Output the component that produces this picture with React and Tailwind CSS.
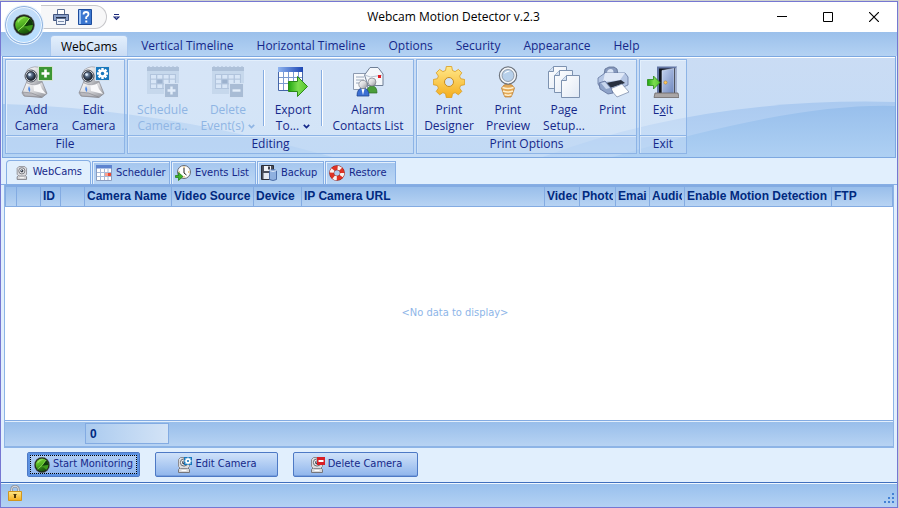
import React, { useState } from "react";

const MENU_TABS = [
  "WebCams",
  "Vertical Timeline",
  "Horizontal Timeline",
  "Options",
  "Security",
  "Appearance",
  "Help",
];

const COLUMNS = [
  { label: "", width: 11 },
  { label: "", width: 24 },
  { label: "ID", width: 20 },
  { label: "", width: 24 },
  { label: "Camera Name", width: 87 },
  { label: "Video Source", width: 82 },
  { label: "Device", width: 48 },
  { label: "IP Camera URL", width: 243 },
  { label: "Video", width: 35 },
  { label: "Photo", width: 36 },
  { label: "Email", width: 34 },
  { label: "Audio", width: 35 },
  { label: "Enable Motion Detection", width: 147 },
  { label: "FTP" },
];

/* ---------- icons ---------- */

const Gradients = () => (
  <svg className="absolute h-0 w-0" aria-hidden="true">
    <defs>
      <linearGradient id="metal" x1="0" y1="0" x2="1" y2="1">
        <stop offset="0" stopColor="#ffffff" />
        <stop offset="0.5" stopColor="#d9d9dc" />
        <stop offset="1" stopColor="#8d8f96" />
      </linearGradient>
      <linearGradient id="gold" x1="0" y1="0" x2="0" y2="1">
        <stop offset="0" stopColor="#ffe88a" />
        <stop offset="1" stopColor="#f5ad1c" />
      </linearGradient>
      <linearGradient id="green" x1="0" y1="0" x2="1" y2="0">
        <stop offset="0" stopColor="#1fa50f" />
        <stop offset="0.5" stopColor="#7ddd50" />
        <stop offset="1" stopColor="#55c52e" />
      </linearGradient>
      <linearGradient id="blueHead" x1="0" y1="0" x2="1" y2="0">
        <stop offset="0" stopColor="#8fb4f0" />
        <stop offset="1" stopColor="#1c46b4" />
      </linearGradient>
      <linearGradient id="door" x1="0" y1="0" x2="1" y2="1">
        <stop offset="0" stopColor="#c3d2f0" />
        <stop offset="1" stopColor="#6d86bd" />
      </linearGradient>
      <linearGradient id="paper" x1="0" y1="0" x2="1" y2="1">
        <stop offset="0" stopColor="#ffffff" />
        <stop offset="1" stopColor="#e0e9f5" />
      </linearGradient>
      <radialGradient id="lens" cx="0.4" cy="0.35" r="0.7">
        <stop offset="0" stopColor="#9fb6d0" />
        <stop offset="0.5" stopColor="#41536b" />
        <stop offset="1" stopColor="#111820" />
      </radialGradient>
      <linearGradient id="radar" x1="0.3" y1="0" x2="0.7" y2="1">
        <stop offset="0" stopColor="#7bd83a" />
        <stop offset="0.45" stopColor="#4fae20" />
        <stop offset="0.75" stopColor="#256b10" />
        <stop offset="1" stopColor="#174a0a" />
      </linearGradient>
    </defs>
  </svg>
);

const Radar = ({ className }) => (
  <svg viewBox="0 0 22 22" className={className}>
    <circle cx="11" cy="11" r="10.5" fill="#1c211d" stroke="#6f776f" strokeWidth="0.6" />
    <circle cx="11" cy="11" r="8.8" fill="url(#radar)" />
    <path d="M16.5 4.2A8.8 8.8 0 0 1 19.8 11L11 12.500Z" fill="#0f3a0a" />
    <path d="M11 12.500 19.8 11A8.8 8.8 0 0 1 17 17.500Z" fill="#3f9a1c" />
    <path d="M5 16.500 11 11.500 16.500 4.200" fill="none" stroke="#a6f56a" strokeWidth="0.9" />
    <path d="M4.500 6.500Q8 2.500 13 3 8 4.500 5 9Z" fill="#b6f58c" opacity="0.600" />
  </svg>
);

const CameraBody = () => (
  <g>
    <path d="M6 15 1 27l2 3 18 1.500 5-4-5-12Z" fill="url(#metal)" stroke="#85858c" strokeWidth="0.7" />
    <path d="M12 16h6l3 7 4 5-12-3Z" fill="#f8f8fa" />
    <path d="m1.500 26 9 1 10 4-17-1Z" fill="#b9b9bf" stroke="#85858c" strokeWidth="0.6" />
    <path d="M6 4q8-6 15-1v13q-7 5-15 1Z" fill="url(#metal)" stroke="#9b9ba2" strokeWidth="0.7" />
    <circle cx="10" cy="10" r="6" fill="#cfd3da" stroke="#4b515c" />
    <circle cx="10" cy="10" r="4.4" fill="url(#lens)" stroke="#1c2028" strokeWidth="0.8" />
    <circle cx="8.6" cy="8.6" r="1.3" fill="#dcebfa" />
    <path d="M8 20q2 3 1 6-3-2-1-6Z" fill="#4b87e6" />
  </g>
);

const Cog = ({ cx, cy, r, fill, hole }) => (
  <g>
    {[0, 45, 90, 135].map((a) => (
      <rect
        key={a}
        x={cx - r * 0.22}
        y={cy - r}
        width={r * 0.44}
        height={r * 2}
        fill={fill}
        transform={`rotate(${a} ${cx} ${cy})`}
      />
    ))}
    <circle cx={cx} cy={cy} r={r * 0.72} fill={fill} />
    <circle cx={cx} cy={cy} r={r * 0.32} fill={hole} />
  </g>
);

const AddCameraIcon = () => (
  <svg viewBox="0 0 32 32" className="h-8 w-8">
    <CameraBody />
    <rect x="17.5" y="0.5" width="14" height="14" fill="#3c9634" stroke="#d6e4d4" />
    <path d="M24.5 3.5v8M20.5 7.5h8" stroke="#fff" strokeWidth="2.6" />
  </svg>
);

const EditCameraIcon = () => (
  <svg viewBox="0 0 32 32" className="h-8 w-8">
    <CameraBody />
    <rect x="17.5" y="0.5" width="14" height="14" fill="#1878bd" stroke="#d3e0ee" />
    <Cog cx={24.5} cy={7.5} r={5.5} fill="#fff" hole="#1878bd" />
  </svg>
);

const DisabledCalendar = ({ minus }) => (
  <svg viewBox="0 0 32 32" className="h-8 w-8 opacity-80">
    <path d="M0 1h32v27H0Z" fill="#c3d5ea" />
    <path d="M0 1h32v4H0Z" fill="#a5b9d2" />
    <path d="M2 1v-1M6 1v-1M10 1v-1M14 1v-1M18 1v-1M22 1v-1M26 1v-1M30 1v-1" stroke="#9fb3cd" />
    <path d="M3 8h26v15H3Z" fill="#a9bdd7" />
    {[0, 1, 2].map((row) =>
      [0, 1, 2, 3].map((col) => (
        <rect key={`${row}${col}`} x={4 + col * 6.3} y={9 + row * 4.7} width="5" height="3.6" fill={row === 1 && col === 1 ? "#8fa6c5" : "#d9e7f7"} />
      ))
    )}
    <rect x="17.5" y="17.5" width="14" height="14" fill="#9eb3cd" stroke="#d5e3f4" />
    <path d={minus ? "M20.5 24.5h8" : "M20.5 24.5h8M24.5 20.5v8"} stroke="#e6f0fb" strokeWidth="2.4" />
  </svg>
);

const ExportIcon = () => (
  <svg viewBox="0 0 32 32" className="h-8 w-8">
    <path d="M1.5 1.5h24v23h-24Z" fill="#fff" stroke="#4465a8" />
    <path d="M1 1h25v5H1Z" fill="url(#blueHead)" />
    <path d="M6.5 6v18M11.5 6v18M16.5 6v18M21.5 6v18M2 11.5h23M2 17.5h23" stroke="#7b9bd0" />
    <path d="M11.5 15.5h9v-5l10 10-10 10v-5h-9Z" fill="url(#green)" stroke="#2c8a18" />
  </svg>
);

const ContactsIcon = () => (
  <svg viewBox="0 0 32 32" className="h-8 w-8">
    <path d="M1.5 7.5h14v16h-14Z" fill="#f7f9fc" stroke="#8c9ab0" />
    <path d="M4 11h8M4 14h8M4 17h6" stroke="#9aa8bd" />
    <path d="M12.500 9 18 1.500h8L31 8v11.500H16Z" fill="#f4f7fb" stroke="#6f7f96" />
    <path d="m12.500 9 6 2 12.500-2" fill="none" stroke="#b6c1d0" />
    <path d="M26 9h3v3h-3Z" fill="#e01b24" />
    <path d="M15 27q0-7 5-7t5 7Z" fill="#4b9e3a" stroke="#2d6b22" strokeWidth="0.7" />
    <circle cx="20" cy="16" r="4" fill="url(#metal)" stroke="#7d8088" strokeWidth="0.7" />
    <path d="M5 30q0-8 6-8t6 8Z" fill="#3b6fd4" stroke="#1f4590" strokeWidth="0.8" />
    <path d="m9.5 23 1.5 6 1.5-6Z" fill="#fff" />
    <circle cx="11" cy="18.5" r="4.2" fill="url(#metal)" stroke="#7d8088" strokeWidth="0.7" />
  </svg>
);

const GearIcon = () => (
  <svg viewBox="0 0 32 32" className="h-8 w-8">
    <path
      d="m12.500 4.500.8-4h5.400l.8 4 2.600 1.100 3.300-2.200 3.400 3.400-2.200 3.300 1.100 2.600 4 .8v5.200l-4 .8-1.100 2.600 2.200 3.300-3.400 3.400-3.300-2.200-2.600 1.100-.8 4h-5.400l-.8-4-2.600-1.100-3.300 2.200-3.400-3.400 2.200-3.300-1.100-2.600-4-.8v-5.200l4-.8 1.100-2.600-2.200-3.300 3.400-3.400 3.300 2.200Z"
      fill="url(#gold)"
      stroke="#d99a1c"
      strokeWidth="0.8"
    />
    <circle cx="16" cy="16" r="4.5" fill="#d2e2f6" stroke="#c98c1c" />
  </svg>
);

const PreviewIcon = () => (
  <svg viewBox="0 0 32 32" className="h-8 w-8">
    <path d="M12 19q4-2 8 0l2.500 3-2 6-1.500 3h-6l-1.500-3-2-6Z" fill="#e3a856" stroke="#b9792b" strokeWidth="0.7" />
    <path d="M10.500 21.500q5.500 2 11 0M11 25q5 2 10 0M12.500 28.500q3.500 1.500 7 0" stroke="#fff0cd" strokeWidth="1.600" fill="none" />
    <circle cx="16" cy="9.5" r="8.5" fill="#c4daf1" stroke="#6f757e" strokeWidth="1.4" />
    <circle cx="16" cy="9.5" r="7" fill="none" stroke="#f4f6f8" strokeWidth="1.8" />
    <circle cx="16" cy="9.5" r="6" fill="#b7d0ea" stroke="#858e99" strokeWidth="0.8" />
    <path d="M12 8q2-4 7-3-5 1-7 3Z" fill="#fff" />
  </svg>
);

const Sheet = ({ x, y }) => (
  <g transform={`translate(${x} ${y})`}>
    <path d="M5.500.5h13v22H.5v-17Z" fill="url(#paper)" stroke="#7d92b0" />
    <path d="M5.500.5v5h-5" fill="#d4e1f2" stroke="#7d92b0" />
  </g>
);

const PagesIcon = () => (
  <svg viewBox="0 0 32 32" className="h-8 w-8">
    <Sheet x={0} y={0} />
    <Sheet x={6} y={4} />
    <Sheet x={13} y={9} />
  </svg>
);

const PrinterIcon = () => (
  <svg viewBox="0 0 32 32" className="h-8 w-8">
    <path d="m7 9 1-6 4-2h5l3 2 1 6Z" fill="#8799bd" stroke="#5b6c90" strokeWidth="0.8" />
    <path d="M11 4q3-2 5 0l1 4H9Z" fill="#dce6f6" />
    <path d="m1 12 7-5h20l3 4v8l-7 3-19 2-4-6Z" fill="#b5c6e4" stroke="#64779f" strokeWidth="0.8" />
    <path d="M8 7h20l-5 7-17 2Z" fill="#dfe8f7" />
    <path d="m9 17 15-3 4 3-15 5Z" fill="#28303f" />
    <path d="m13 23 12-5 7 8-12 5Z" fill="#fdfefe" stroke="#8291ad" strokeWidth="0.8" />
    <path d="m2 17 6-2 6 7 2 5-5 1-8-5Z" fill="#8ea3c9" stroke="#5f7099" strokeWidth="0.8" />
    <path d="m4 17 4-1 5 6-4 1Z" fill="#c9d7ee" />
  </svg>
);

const ExitIcon = () => (
  <svg viewBox="0 0 32 32" className="h-8 w-8">
    <path d="M10 .5h20v27H10Z" fill="#6275a3" />
    <path d="M12 2.500h16v25H12Z" fill="#10141e" />
    <path d="m15 4.500 12-2v25H15Z" fill="url(#door)" stroke="#dbe5f7" strokeWidth="0.6" />
    <path d="M28 2.500v25h2V.5Z" fill="#a4b2d0" />
    <path d="M8 27h23l1 4.500H7Z" fill="#aaa6a6" stroke="#6c6868" strokeWidth="0.8" />
    <circle cx="18.5" cy="16.5" r="1.6" fill="#ffc95a" stroke="#b17a24" strokeWidth="0.5" />
    <path d="M.5 13.500h6v-3.500l6.500 6.500-6.500 6.500v-3.500h-6Z" fill="url(#green)" stroke="#2c8a18" strokeWidth="0.8" />
  </svg>
);

const SmallPrinter = () => (
  <svg viewBox="0 0 16 16" className="h-4 w-4">
    <path d="M4.5.5h7v6h-7Z" fill="#fff" stroke="#5c6f93" />
    <path d="M.5 5.5h15v6H.5Z" fill="#8ba0c8" stroke="#42557e" />
    <path d="M3 8h10v2H3Z" fill="#26324c" />
    <path d="M3.5 9.5h9v6h-9Z" fill="#eef3fb" stroke="#5c6f93" />
    <path d="M5 12.5h6" stroke="#7d8ead" />
  </svg>
);

const HelpBook = () => (
  <svg viewBox="0 0 16 16" className="h-4 w-4">
    <path d="M1.5.5h13v15h-13Z" fill="#3a76d0" stroke="#1d4c9c" />
    <path d="M2 1h2v14H2Z" fill="#9cc2f5" />
    <path d="M6.5 5.5Q6.5 3 9 3t2.500 2.300Q11.500 7 9.200 8.200V10" fill="none" stroke="#fff" strokeWidth="1.8" />
    <path d="M8.300 11.500h2v2h-2Z" fill="#fff" />
  </svg>
);

const WebcamIcon = ({ badge }) => (
  <svg viewBox="0 0 16 16" className="h-4 w-4">
    <path d="M2.5 15.5v-3l2-2h7l2 2v3Z" fill="#d8d8da" stroke="#76767c" />
    <path d="M4.500.5h7l2 2v7l-2 2h-7l-2-2v-7Z" fill="#dcdcdf" stroke="#8b8b91" />
    <circle cx="8" cy="5.5" r="3.6" fill="#f5f5f6" stroke="#66686f" />
    <circle cx="8" cy="5.5" r="1.9" fill="#3d424d" />
    <circle cx="7.5" cy="5" r="0.7" fill="#b9c8dc" />
    <path d="M5.500 13.500h5" stroke="#fff" />
    {badge === "edit" && (
      <g>
        <rect x="8" y="0" width="8" height="8" fill="#1878bd" />
        <Cog cx={12} cy={4} r={3.4} fill="#fff" hole="#1878bd" />
      </g>
    )}
    {badge === "delete" && (
      <g>
        <rect x="8" y="0" width="8" height="8" fill="#d81f26" />
        <path d="M9.5 4h5" stroke="#fff" strokeWidth="2" />
      </g>
    )}
  </svg>
);

const SchedulerIcon = () => (
  <svg viewBox="0 0 16 16" className="h-4 w-4">
    <path d="M.5.5h15v15H.5Z" fill="#fff" stroke="#8b9dbf" />
    <path d="M0 0h16v3.5H0Z" fill="#5e84cf" />
    <path d="M4.5 4v11M8.5 4v11M12 4v11M1 7.5h14M1 11.5h14" stroke="#a9bad8" />
    <path d="M12 8h3v3h-3Z" fill="#ee4b34" />
    <path d="M9 8h3v3H9Z" fill="#f6a08f" />
  </svg>
);

const EventsIcon = () => (
  <svg viewBox="0 0 16 16" className="h-4 w-4">
    <circle cx="9" cy="7" r="6.5" fill="#fdfdfd" stroke="#666a73" />
    <path d="M9 1.500v1.500M9 11v1.500M3.500 7h1.500M13 7h1.500" stroke="#d29a2e" />
    <path d="M9 3v5l2.500 2" fill="none" stroke="#222" />
    <path d="M.5 10.500h3v-3l4.500 4-4.500 4v-3h-3Z" fill="#3cb428" stroke="#1d7213" strokeWidth="0.7" />
  </svg>
);

const BackupIcon = () => (
  <svg viewBox="0 0 16 16" className="h-4 w-4">
    <path d="M.5.5h12v14H.5Z" fill="#4b4f5b" stroke="#2b2e37" />
    <path d="M3 1h7v5H3Z" fill="#f1f3f7" />
    <path d="M7 1.5h2v3H7Z" fill="#3d404a" />
    <path d="M2.5 8h8v6h-8Z" fill="#e6eaf1" />
    <path d="M8.5 5.5q3.500-2 7 0v9q-3.500 2-7 0Z" fill="#8fb0df" stroke="#4d6ea8" />
    <path d="M8.5 5.5q3.500 2 7 0" fill="none" stroke="#dce9fa" />
  </svg>
);

const RestoreIcon = () => (
  <svg viewBox="0 0 16 16" className="h-4 w-4">
    <circle cx="8" cy="8" r="5.3" fill="none" stroke="#8f2018" strokeWidth="5" />
    <circle cx="8" cy="8" r="5.3" fill="none" stroke="#df3325" strokeWidth="4" />
    <circle cx="8" cy="8" r="5.3" fill="none" stroke="#f7f4f2" strokeWidth="4" strokeDasharray="3.330 4.995" />
  </svg>
);

const LockIcon = () => (
  <svg viewBox="0 0 14 16" className="h-4 w-3.5">
    <path d="M3.5 8V4.500Q3.500 1.200 7 1.200t3.500 3.300V8" fill="none" stroke="#8c929c" strokeWidth="2.4" />
    <path d="M3.5 8V4.500Q3.500 1.200 7 1.200t3.500 3.300V8" fill="none" stroke="#e6e9ee" strokeWidth="0.9" />
    <path d="M.5 6.5h13v9H.5Z" fill="url(#gold)" stroke="#d0961f" />
    <path d="M7 9v4" stroke="#4f3505" strokeWidth="2" />
    <path d="M5.500 9.500h3" stroke="#4f3505" />
  </svg>
);

const Chevron = () => (
  <svg viewBox="0 0 7 5" className="ml-1 inline h-[5px] w-[7px] align-middle">
    <path d="m.8.8 2.700 2.700L6.200.8" fill="none" stroke="currentColor" strokeWidth="1.7" />
  </svg>
);

/* ---------- ribbon ---------- */

const RibbonButton = ({ icon, width, disabled, children }) => (
  <button
    type="button"
    disabled={disabled}
    className={`flex flex-col items-center pt-1.5 text-center leading-4 whitespace-nowrap ${width} ${
      disabled ? "text-[#8fb5e4]" : "text-[#15288a]"
    }`}
  >
    {icon}
    <span className="mt-1">{children}</span>
  </button>
);

const RibbonGroup = ({ title, children }) => (
  <section className="flex flex-col border border-[#8db4e6] bg-white/25 shadow-[inset_1px_1px_0_#e3effc]">
    <div className="flex h-[75px] px-0.5">{children}</div>
    <h2 className="h-[18px] border-t border-[#8db4e6] bg-[#9fc4ee]/30 text-center leading-4 text-[#15288a] shadow-[inset_0_1px_0_#dceafa]">
      {title}
    </h2>
  </section>
);

const Separator = () => (
  <div className="mx-0.5 mt-2.5 h-14 w-0.5 border-l border-[#86ade2] bg-white" />
);

const RibbonWave = () => (
  <svg
    viewBox="0 0 893 100"
    preserveAspectRatio="none"
    className="absolute inset-0 h-full w-full"
    aria-hidden="true"
  >
    <defs>
      <linearGradient id="waveA" x1="0" y1="0" x2="0" y2="1">
        <stop offset="0" stopColor="#abcaf0" />
        <stop offset="1" stopColor="#b9d5f5" />
      </linearGradient>
      <linearGradient id="waveB" x1="0" y1="0" x2="0" y2="1">
        <stop offset="0" stopColor="#98bfec" />
        <stop offset="1" stopColor="#aed0f3" />
      </linearGradient>
    </defs>
    <path d="M0 47Q160 52 330 100H0Z" fill="url(#waveB)" opacity="0.7" />
    <path d="M540 100Q700 40 893 45V100Z" fill="url(#waveA)" />
    <path d="M610 100Q790 46 893 49V100Z" fill="url(#waveB)" />
  </svg>
);

const Ribbon = () => (
  <div className="relative border border-[#7da8e0] bg-gradient-to-b from-[#cadcf4] to-[#c3dbf6] pt-0.5 pb-[3px] shadow-[inset_0_1px_0_#fff]">
    <RibbonWave />
    <div className="relative flex gap-0.5 pl-0.5">
      <RibbonGroup title="File">
        <RibbonButton icon={<AddCameraIcon />} width="w-[57px]">Add<br />Camera</RibbonButton>
        <RibbonButton icon={<EditCameraIcon />} width="w-[57px]">Edit<br />Camera</RibbonButton>
      </RibbonGroup>
      <RibbonGroup title="Editing">
        <RibbonButton icon={<DisabledCalendar />} width="w-[65px]" disabled>Schedule<br />Camera..</RibbonButton>
        <RibbonButton icon={<DisabledCalendar minus />} width="w-[66px]" disabled>Delete<br />Event(s)<Chevron /></RibbonButton>
        <Separator />
        <RibbonButton icon={<ExportIcon />} width="w-[52px]">Export<br />To...<Chevron /></RibbonButton>
        <Separator />
        <RibbonButton icon={<ContactsIcon />} width="w-[86px]">Alarm<br />Contacts List</RibbonButton>
      </RibbonGroup>
      <RibbonGroup title="Print Options">
        <RibbonButton icon={<GearIcon />} width="w-[60px]">Print<br />Designer</RibbonButton>
        <RibbonButton icon={<PreviewIcon />} width="w-[58px]">Print<br />Preview</RibbonButton>
        <RibbonButton icon={<PagesIcon />} width="w-[54px]">Page<br />Setup...</RibbonButton>
        <RibbonButton icon={<PrinterIcon />} width="w-[43px]">Print</RibbonButton>
      </RibbonGroup>
      <RibbonGroup title="Exit">
        <RibbonButton icon={<ExitIcon />} width="w-[42px]">E<u>x</u>it</RibbonButton>
      </RibbonGroup>
    </div>
  </div>
);

/* ---------- window parts ---------- */

const TitleBar = () => (
  <header className="relative flex h-[30px] items-center bg-white">
    <div className="ml-10 flex h-6 w-[66px] items-center gap-2 rounded-r-full border border-l-0 border-[#c6c6ca] bg-[#f7f7f8] pl-3">
      <button type="button" aria-label="Print"><SmallPrinter /></button>
      <button type="button" aria-label="Help"><HelpBook /></button>
    </div>
    <button type="button" aria-label="Customize toolbar" className="ml-1.5">
      <svg viewBox="0 0 7 7" className="h-[7px] w-[7px]">
        <path d="M1 .5h5M1 3h5L3.500 5.500Z" fill="none" stroke="#1d2a7c" strokeWidth="1.200" />
      </svg>
    </button>
    <h1 className="flex-1 pl-7 text-center text-black">Webcam Motion Detector v.2.3</h1>
    <div className="flex text-black">
      <button type="button" aria-label="Minimize" className="flex w-[46px] justify-center">
        <svg viewBox="0 0 10 10" className="h-2.5 w-2.5"><path d="M0 4.5h10" stroke="currentColor" /></svg>
      </button>
      <button type="button" aria-label="Maximize" className="flex w-[46px] justify-center">
        <svg viewBox="0 0 10 10" className="h-2.5 w-2.5"><path d="M.5.5h9v9h-9Z" fill="none" stroke="currentColor" /></svg>
      </button>
      <button type="button" aria-label="Close" className="flex w-[46px] justify-center">
        <svg viewBox="0 0 10 10" className="h-2.5 w-2.5"><path d="m0 0 10 10M10 0 0 10" stroke="currentColor" strokeWidth="1.2" /></svg>
      </button>
    </div>
    <button
      type="button"
      aria-label="Application menu"
      className="absolute top-1 left-1 z-10 flex h-[38px] w-[38px] items-center justify-center rounded-full border border-[#8fb2de] bg-gradient-to-b from-[#c5ddf8] to-[#b4dcff] shadow-[0_0_0_1px_#e8f2fd,inset_0_0_0_1px_#f2f8ff]"
    >
      <Radar className="h-[22px] w-[22px]" />
    </button>
  </header>
);

const MenuTabs = ({ active, onSelect }) => (
  <nav className="flex h-6 items-end gap-[3px] bg-gradient-to-b from-[#9bc0eb] to-[#b4d2f3] pl-[49px]">
    {MENU_TABS.map((tab) => (
      <button
        key={tab}
        type="button"
        onClick={() => onSelect(tab)}
        className={`h-[21px] px-2.5 pt-px whitespace-nowrap ${
          tab === active
            ? "rounded-t border border-b-0 border-[#a9c8ef] bg-gradient-to-b from-[#e3effc] to-[#cadcf4] text-black"
            : "text-[#15288a]"
        }`}
      >
        {tab}
      </button>
    ))}
  </nav>
);

const PageTab = ({ icon, label, width, active }) => (
  <button
    type="button"
    role="tab"
    aria-selected={active}
    className={`flex items-center border border-b-0 border-[#86aee4] text-[#15288a] ${width} ${
      active
        ? "h-6 gap-1 rounded-t bg-[#e1effd] px-2"
        : "h-[23px] gap-1 bg-gradient-to-b from-[#a4c6ee] to-[#bcd7f5] px-[3px] shadow-[inset_1px_1px_0_#e3effc]"
    }`}
  >
    {icon}
    {label}
  </button>
);

const CameraGrid = () => (
  <main className="mx-[3px] flex flex-1 flex-col border-x border-b-2 border-[#8db4e6] bg-white">
    <table className="w-full table-fixed border-collapse font-['Liberation_Sans',Arial,sans-serif] text-xs font-bold text-[#00297f]">
      <colgroup>
        {COLUMNS.map((col, i) => (
          <col key={i} style={col.width ? { width: col.width } : undefined} />
        ))}
      </colgroup>
      <thead>
        <tr className="h-5 bg-gradient-to-b from-[#97bdea] to-[#b7d3f3]">
          {COLUMNS.map((col, i) => (
            <th
              key={i}
              scope="col"
              className="border border-t-2 border-[#83abe2] px-0.5 text-left leading-4"
            >
              <div className="overflow-hidden whitespace-nowrap">{col.label}</div>
            </th>
          ))}
        </tr>
      </thead>
    </table>
    <p className="flex flex-1 items-center justify-center pl-3 text-[#8db5e8]">&lt;No data to display&gt;</p>
    <div className="h-[26px] border-t border-[#83abe2] bg-gradient-to-b from-[#97bdea] to-[#b7d3f3] pt-0.5 pl-20 shadow-[inset_0_1px_0_#e3effc]">
      <output className="block h-[21px] w-[84px] border border-[#83abe2] bg-gradient-to-r from-[#abcbef] to-[#d3e3f6] pl-1 font-['Liberation_Sans',Arial,sans-serif] text-xs leading-5 font-bold text-[#00297f]">
        0
      </output>
    </div>
  </main>
);

const ActionButton = ({ icon, width, focused, children }) => (
  <button
    type="button"
    className={`relative flex h-[25px] items-center justify-center gap-[3px] rounded-xs border border-[#4d79c5] text-[#15288a] ${width} ${
      focused
        ? "bg-gradient-to-b from-[#b5d1f5] to-[#8db4ee] shadow-[inset_0_0_0_2px_#5c92e2]"
        : "bg-gradient-to-b from-[#d0e2f9] to-[#8fb5ec] shadow-[inset_0_-1px_0_#779fdd]"
    }`}
  >
    {focused && <span className="absolute inset-0.5 border border-dotted border-black" />}
    {icon}
    {children}
  </button>
);

const StatusBar = () => (
  <footer className="flex h-[25px] items-center justify-between border-t border-[#3f6fbd] bg-gradient-to-b from-[#97bfed] to-[#b4d2f3] px-[7px] pb-1 shadow-[inset_0_1px_0_#f0f7ff]">
    <LockIcon />
    <svg viewBox="0 0 10 10" className="-mr-1 h-2.5 w-2.5 self-end">
      <path d="M8 0h2v2H8ZM8 4h2v2H8ZM8 8h2v2H8ZM4 4h2v2H4ZM4 8h2v2H4ZM0 8h2v2H0Z" fill="#4381d5" />
    </svg>
  </footer>
);

function App() {
  const [activeMenu, setActiveMenu] = useState("WebCams");

  return (
    <div className="flex min-h-screen flex-col border-t border-r border-[#cfd3cf] font-['Open_Sans','Segoe_UI',sans-serif] text-xs">
      <Gradients />
      <div className="flex flex-1 flex-col border border-[#7677d2] bg-[#e1effd]">
        <TitleBar />
        <MenuTabs active={activeMenu} onSelect={setActiveMenu} />
        <div className="px-px">
          <Ribbon />
        </div>
        <div className="flex flex-1 flex-col font-['DejaVu_Sans_Condensed',Tahoma,sans-serif] text-[11px]">
          <div role="tablist" className="flex items-end gap-px border-b border-[#86aee4] pt-0.5 pl-[5px]">
            <PageTab icon={<WebcamIcon />} label="WebCams" width="w-[85px]" active />
            <PageTab icon={<SchedulerIcon />} label="Scheduler" width="w-[78px]" />
            <PageTab icon={<EventsIcon />} label="Events List" width="w-[85px]" />
            <PageTab icon={<BackupIcon />} label="Backup" width="w-[67px]" />
            <PageTab icon={<RestoreIcon />} label="Restore" width="w-[71px]" />
          </div>
          <CameraGrid />
          <div className="flex gap-[15px] pt-1 pr-4 pb-[5px] pl-[26px]">
            <ActionButton icon={<Radar className="h-4 w-4" />} width="w-[113px]" focused>
              Start Monitoring
            </ActionButton>
            <ActionButton icon={<WebcamIcon badge="edit" />} width="w-[123px]">
              Edit Camera
            </ActionButton>
            <ActionButton icon={<WebcamIcon badge="delete" />} width="w-[125px]">
              Delete Camera
            </ActionButton>
          </div>
          <StatusBar />
        </div>
      </div>
    </div>
  );
}

export default App;
